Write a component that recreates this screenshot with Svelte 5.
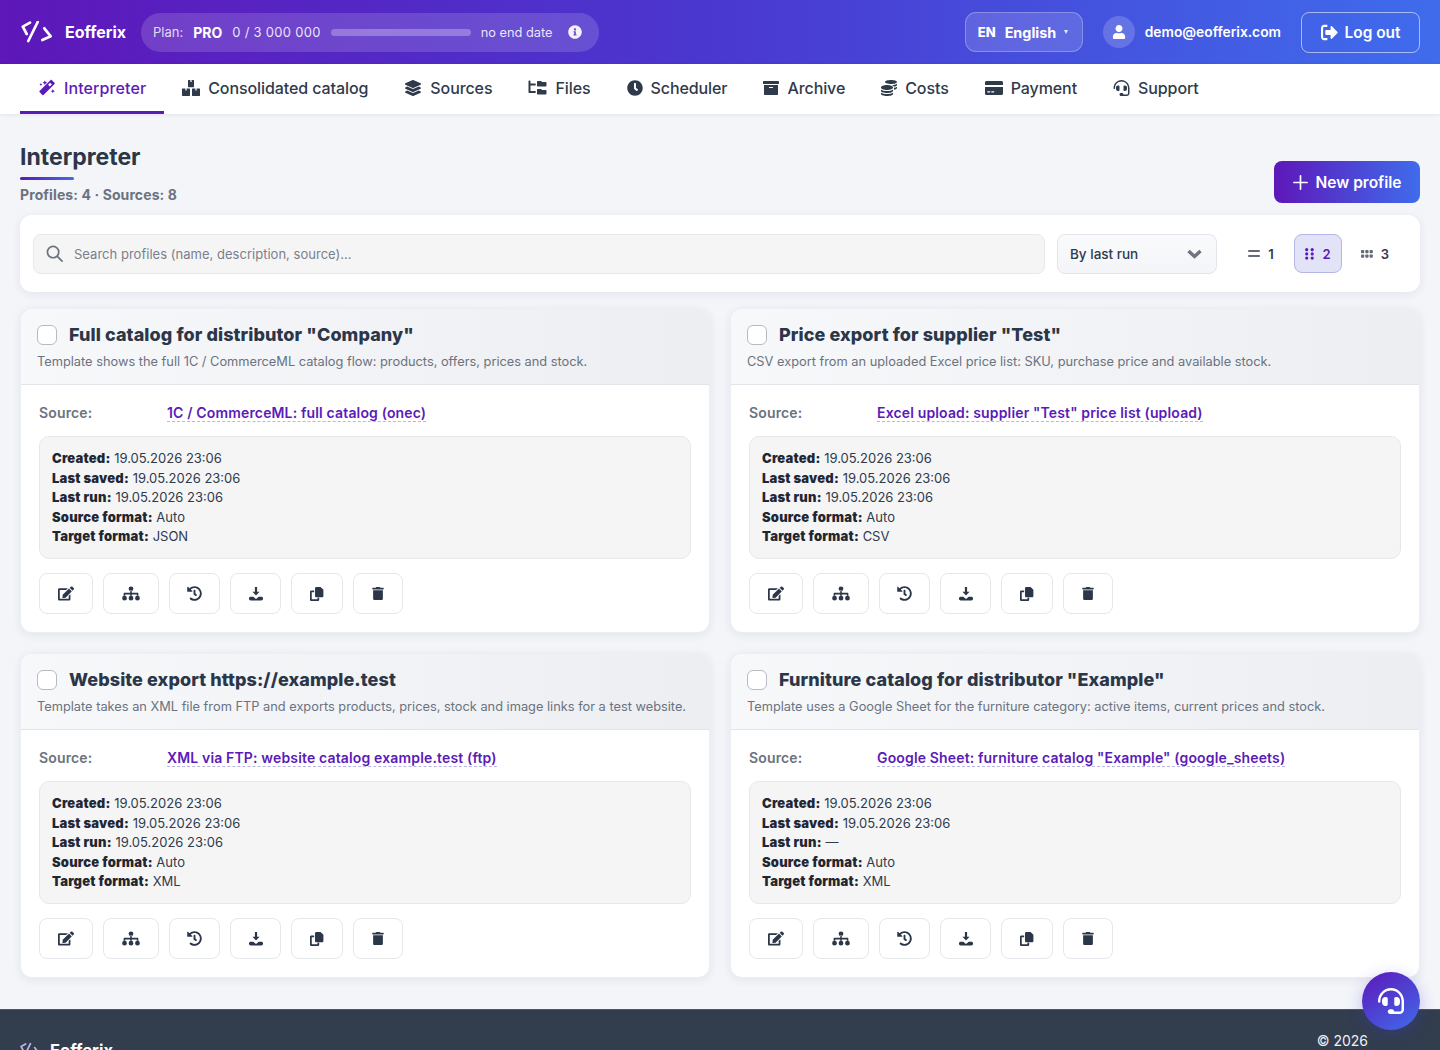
<script>
    const icons = {
        magic: ['0 0 512 512', 'M398 28l86 86c9 9 9 24 0 33L150 481c-9 9-24 9-33 0l-86-86c-9-9-9-24 0-33L365 28c9-9 24-9 33 0zM350 110l-62 62 52 52 62-62zM192 40l22 50 50 22-50 22-22 50-22-50-50-22 50-22zM72 120l14 32 32 14-32 14-14 32-14-32-32-14 32-14zM432 300l20 46 46 20-46 20-20 46-20-46-46-20 46-20z'],
        boxes: ['0 0 576 512', 'M192 16c0-9 7-16 16-16h160c9 0 16 7 16 16v200c0 9-7 16-16 16H208c-9 0-16-7-16-16zM268 0v60h40V0zM16 272h224c9 0 16 7 16 16v208c0 9-7 16-16 16H16c-9 0-16-7-16-16V288c0-9 7-16 16-16zM108 272v60h40v-60zM336 272h224c9 0 16 7 16 16v208c0 9-7 16-16 16H336c-9 0-16-7-16-16V288c0-9 7-16 16-16zM428 272v60h40v-60z'],
        layers: ['0 0 512 512', 'M12.41 148.02l232.94 105.67c6.8 3.09 14.49 3.09 21.29 0l232.94-105.67c16.55-7.51 16.55-32.52 0-40.03L266.65 2.31a25.607 25.607 0 0 0-21.29 0L12.41 107.98c-16.55 7.51-16.55 32.53 0 40.04zm487.18 88.28l-58.09-26.33-161.64 73.27c-7.56 3.43-15.59 5.17-23.86 5.17s-16.29-1.74-23.86-5.17L70.51 209.97l-58.1 26.33c-16.55 7.5-16.55 32.5 0 40l232.94 105.59c6.8 3.08 14.49 3.08 21.29 0L499.59 276.3c16.55-7.5 16.55-32.5 0-40zm0 127.8l-57.87-26.23-161.86 73.37c-7.56 3.43-15.59 5.17-23.86 5.17s-16.29-1.74-23.86-5.17L70.29 337.87 12.41 364.1c-16.55 7.5-16.55 32.5 0 40l232.94 105.59c6.8 3.08 14.49 3.08 21.29 0L499.59 404.1c16.55-7.5 16.55-32.5 0-40z'],
        files: ['0 0 576 512', 'M0 48C0 30 14 16 32 16s32 14 32 32v64h152c9 0 16 7 16 16v32c0 9-7 16-16 16H64v176h152c9 0 16 7 16 16v32c0 9-7 16-16 16H32c-18 0-32-14-32-32zM304 32h96l32 32h112c18 0 32 14 32 32v80c0 18-14 32-32 32H304c-18 0-32-14-32-32V64c0-18 14-32 32-32zM304 288h96l32 32h112c18 0 32 14 32 32v80c0 18-14 32-32 32H304c-18 0-32-14-32-32V320c0-18 14-32 32-32z'],
        clock: ['0 0 512 512', 'M256,8C119,8,8,119,8,256S119,504,256,504,504,393,504,256,393,8,256,8Zm92.49,313h0l-20,25a16,16,0,0,1-22.49,2.5h0l-67-49.72a40,40,0,0,1-15-31.23V112a16,16,0,0,1,16-16h32a16,16,0,0,1,16,16V256l58,42.5A16,16,0,0,1,348.49,321Z'],
        archive: ['0 0 512 512', 'M32 448c0 17.7 14.3 32 32 32h384c17.7 0 32-14.3 32-32V160H32v288zm160-212c0-6.6 5.4-12 12-12h104c6.6 0 12 5.4 12 12v8c0 6.6-5.4 12-12 12H204c-6.6 0-12-5.4-12-12v-8zM480 32H32C14.3 32 0 46.3 0 64v48c0 8.8 7.2 16 16 16h480c8.8 0 16-7.2 16-16V64c0-17.7-14.3-32-32-32z'],
        coins: ['0 0 512 512', 'M0 405.3V448c0 35.3 86 64 192 64s192-28.7 192-64v-42.7C342.7 434.4 267.2 448 192 448S41.3 434.4 0 405.3zM320 128c106 0 192-28.7 192-64S426 0 320 0 128 28.7 128 64s86 64 192 64zM0 300.4V352c0 35.3 86 64 192 64s192-28.7 192-64v-51.6c-41.3 34-116.9 51.6-192 51.6S41.3 334.4 0 300.4zm416 11c57.3-11.1 96-31.7 96-55.4v-42.7c-23.2 16.4-57.3 27.6-96 34.5v63.6zM192 160C86 160 0 195.8 0 240s86 80 192 80 192-35.8 192-80-86-80-192-80zm219.3 56.3c60-10.8 100.7-32 100.7-56.3v-42.7c-35.5 25.1-96.5 38.6-160.7 41.8 29.5 14.3 51.2 33.5 60 57.2z'],
        card: ['0 0 576 512', 'M0 432c0 26.5 21.5 48 48 48h480c26.5 0 48-21.5 48-48V224H0v208zm72-64c0-6.6 5.4-12 12-12h72c6.6 0 12 5.4 12 12v16c0 6.6-5.4 12-12 12H84c-6.6 0-12-5.4-12-12zm128 0c0-6.6 5.4-12 12-12h72c6.6 0 12 5.4 12 12v16c0 6.6-5.4 12-12 12h-72c-6.6 0-12-5.4-12-12zM576 80v80H0V80c0-26.5 21.5-48 48-48h480c26.5 0 48 21.5 48 48z'],
        headset: ['0 0 512 512', 'M192 208c0-17.67-14.33-32-32-32h-16c-35.35 0-64 28.65-64 64v48c0 35.35 28.65 64 64 64h16c17.67 0 32-14.33 32-32V208zm176 144c35.35 0 64-28.65 64-64v-48c0-35.35-28.65-64-64-64h-16c-17.67 0-32 14.33-32 32v112c0 17.67 14.33 32 32 32h16zM256 0C113.18 0 4.58 118.83 0 256v16c0 8.84 7.16 16 16 16h16c8.84 0 16-7.16 16-16v-16c0-114.69 93.31-208 208-208s208 93.31 208 208h-.12c.08 2.43.12 165.72.12 165.72 0 23.35-18.93 42.28-42.28 42.28H320c0-26.51-21.49-48-48-48h-32c-26.51 0-48 21.49-48 48s21.49 48 48 48h181.72c49.86 0 90.28-40.42 90.28-90.28V256C507.42 118.83 398.82 0 256 0z'],
        info: ['0 0 512 512', 'M256 8C119.043 8 8 119.083 8 256c0 136.997 111.043 248 248 248s248-111.003 248-248C504 119.083 392.957 8 256 8zm0 110c23.196 0 42 18.804 42 42s-18.804 42-42 42-42-18.804-42-42 18.804-42 42-42zm56 254c0 6.627-5.373 12-12 12h-88c-6.627 0-12-5.373-12-12v-24c0-6.627 5.373-12 12-12h12v-64h-12c-6.627 0-12-5.373-12-12v-24c0-6.627 5.373-12 12-12h64c6.627 0 12 5.373 12 12v100h12c6.627 0 12 5.373 12 12v24z'],
        user: ['0 0 448 512', 'M224 256c70.7 0 128-57.3 128-128S294.7 0 224 0 96 57.3 96 128s57.3 128 128 128zm89.6 32h-16.7c-22.2 10.2-46.9 16-72.9 16s-50.6-5.8-72.9-16h-16.7C60.2 288 0 348.2 0 422.4V464c0 26.5 21.5 48 48 48h352c26.5 0 48-21.5 48-48v-41.6c0-74.2-60.2-134.4-134.4-134.4z'],
        logout: ['0 0 512 512', 'M497 273L329 441c-15 15-41 4.5-41-17v-96H152c-13.3 0-24-10.7-24-24v-96c0-13.3 10.7-24 24-24h136V88c0-21.4 25.9-32 41-17l168 168c9.3 9.4 9.3 24.6 0 34zM192 436v40c0 6.6-5.4 12-12 12H96c-53 0-96-43-96-96V120c0-53 43-96 96-96h84c6.6 0 12 5.4 12 12v40c0 6.6-5.4 12-12 12H96c-17.7 0-32 14.3-32 32v272c0 17.7 14.3 32 32 32h84c6.6 0 12 5.4 12 12z'],
        edit: ['0 0 576 512', 'M402.6 83.2l90.2 90.2c3.8 3.8 3.8 10 0 13.8L274.4 405.6l-92.8 10.3c-12.4 1.4-22.9-9.1-21.5-21.5l10.3-92.8L388.8 83.2c3.8-3.8 10-3.8 13.8 0zm162-22.9l-48.8-48.8c-15.2-15.2-39.9-15.2-55.2 0l-35.4 35.4c-3.8 3.8-3.8 10 0 13.8l90.2 90.2c3.8 3.8 10 3.8 13.8 0l35.4-35.4c15.2-15.3 15.2-40 0-55.2zM384 346.2V448H64V128h229.8c3.2 0 6.2-1.3 8.5-3.5l40-40c7.6-7.6 2.2-20.5-8.5-20.5H48C21.5 64 0 85.5 0 112v352c0 26.5 21.5 48 48 48h352c26.5 0 48-21.5 48-48V306.2c0-10.7-12.9-16-20.5-8.5l-40 40c-2.2 2.3-3.5 5.3-3.5 8.5z'],
        sitemap: ['0 0 640 512', 'M235 90a85 85 0 1 0 170 0a85 85 0 1 0-170 0zM5 422a85 85 0 1 0 170 0a85 85 0 1 0-170 0zM235 422a85 85 0 1 0 170 0a85 85 0 1 0-170 0zM465 422a85 85 0 1 0 170 0a85 85 0 1 0-170 0zM292 150h56v82h212c12 0 22 10 22 22v90h-56v-56H348v56h-56v-56H114v56H58v-90c0-12 10-22 22-22h212z'],
        history: ['0 0 512 512', 'M504 255.531c.253 136.64-111.18 248.372-247.82 248.468-59.015.042-113.223-20.53-155.822-54.911-11.077-8.94-11.905-25.541-1.839-35.607l11.267-11.267c8.609-8.609 22.353-9.551 31.891-1.984C173.062 425.135 212.781 440 256 440c101.705 0 184-82.311 184-184 0-101.705-82.311-184-184-184-48.814 0-93.149 18.969-126.068 49.932l50.754 50.754c10.08 10.08 2.941 27.314-11.313 27.314H24c-8.837 0-16-7.163-16-16V38.627c0-14.254 17.234-21.393 27.314-11.314l49.372 49.372C129.209 34.136 189.552 8 256 8c136.81 0 247.747 110.78 248 247.531zm-180.912 78.784l9.823-12.63c8.138-10.463 6.253-25.542-4.21-33.679L288 256.349V152c0-13.255-10.745-24-24-24h-16c-13.255 0-24 10.745-24 24v135.651l65.409 50.874c10.463 8.137 25.541 6.253 33.679-4.21z'],
        download: ['0 0 512 512', 'M216 0h80v170h90L256 310 126 170h90zM0 410c0-30 30-50 60-50h100l70 60c15 13 37 13 52 0l70-60h100c30 0 60 20 60 50v30c0 30-30 50-60 50H60c-30 0-60-20-60-50z'],
        copy: ['0 0 512 512', 'M232 0h140c9 0 18 4 24 10l84 84c6 6 10 15 10 24v210c0 27-21 48-48 48H232c-27 0-48-21-48-48V48c0-27 21-48 48-48zM48 128h104v64H64v256h208v-56h64v72c0 27-21 48-48 48H48c-27 0-48-21-48-48V176c0-27 21-48 48-48z'],
        trash: ['0 0 448 512', 'M32 128h384v336a48 48 0 0 1-48 48H80a48 48 0 0 1-48-48zM432 32H312l-9.4-18.7A24 24 0 0 0 281.1 0H166.8a23.72 23.72 0 0 0-21.4 13.3L136 32H16A16 16 0 0 0 0 48v32a16 16 0 0 0 16 16h416a16 16 0 0 0 16-16V48a16 16 0 0 0-16-16z']
    };

    const navItems = [
        { label: 'Interpreter', icon: 'magic', w: 18, h: 17, active: true },
        { label: 'Consolidated catalog', icon: 'boxes', w: 18, h: 16 },
        { label: 'Sources', icon: 'layers', w: 18, h: 16 },
        { label: 'Files', icon: 'files', w: 19, h: 16 },
        { label: 'Scheduler', icon: 'clock', w: 16, h: 16 },
        { label: 'Archive', icon: 'archive', w: 16, h: 16 },
        { label: 'Costs', icon: 'coins', w: 16, h: 16 },
        { label: 'Payment', icon: 'card', w: 18, h: 16 },
        { label: 'Support', icon: 'headset', w: 17, h: 16 }
    ];

    const stamp = '19.05.2026 23:06';
    const profiles = [
        {
            title: 'Full catalog for distributor "Company"',
            desc: 'Template shows the full 1C / CommerceML catalog flow: products, offers, prices and stock.',
            source: '1C / CommerceML: full catalog (onec)',
            lastRun: stamp,
            target: 'JSON'
        },
        {
            title: 'Price export for supplier "Test"',
            desc: 'CSV export from an uploaded Excel price list: SKU, purchase price and available stock.',
            source: 'Excel upload: supplier "Test" price list (upload)',
            lastRun: stamp,
            target: 'CSV'
        },
        {
            title: 'Website export https://example.test',
            desc: 'Template takes an XML file from FTP and exports products, prices, stock and image links for a test website.',
            source: 'XML via FTP: website catalog example.test (ftp)',
            lastRun: stamp,
            target: 'XML'
        },
        {
            title: 'Furniture catalog for distributor "Example"',
            desc: 'Template uses a Google Sheet for the furniture category: active items, current prices and stock.',
            source: 'Google Sheet: furniture catalog "Example" (google_sheets)',
            lastRun: '—',
            target: 'XML'
        }
    ];

    const actions = [
        { icon: 'edit', title: 'Edit', width: 54, w: 16, h: 15 },
        { icon: 'sitemap', title: 'Structure', width: 56, w: 18, h: 15 },
        { icon: 'history', title: 'History', width: 51.4, w: 15, h: 15 },
        { icon: 'download', title: 'Download', width: 51, w: 14, h: 14 },
        { icon: 'copy', title: 'Copy', width: 51.4, w: 14, h: 14 },
        { icon: 'trash', title: 'Delete', width: 50, w: 12, h: 13 }
    ];

    let search = $state('');
    let columns = $state(2);
</script>

{#snippet icon(name, w, h = w)}
    <svg class="ico" width={w} height={h} viewBox={icons[name][0]} fill="currentColor">
        <path d={icons[name][1]}/>
    </svg>
{/snippet}

{#snippet logo(w)}
    <svg width={w} height={w * 0.6875} viewBox="-1 0 32 22" fill="none" stroke="currentColor" stroke-width="2.7" stroke-linecap="round" stroke-linejoin="round">
        <path d="M8 1.6 0.8 5.6 4.7 13"/>
        <path d="M15.7 1 6.3 20"/>
        <path d="M22.3 7.3 28.7 15.3 20.3 19"/>
    </svg>
{/snippet}

<div class="page">
    <header class="topbar">
        <div class="brand">
            {@render logo(32)}
            <span class="brand-name">Eofferix</span>
        </div>

        <div class="plan">
            <span class="plan-label">Plan:</span>
            <strong class="plan-name">PRO</strong>
            <span class="plan-usage">0 / 3 000 000</span>
            <span class="plan-bar"></span>
            <span class="plan-end">no end date</span>
            <span class="plan-info">{@render icon('info', 14)}</span>
        </div>

        <div class="topbar-right">
            <button class="lang">
                <span class="lang-code">EN</span>
                <span class="lang-name">English</span>
                <span class="lang-caret"></span>
            </button>
            <div class="account">
                <span class="avatar">{@render icon('user', 14)}</span>
                <span class="email">demo@eofferix.com</span>
            </div>
            <button class="logout">
                {@render icon('logout', 17)}
                Log out
            </button>
        </div>
    </header>

    <nav class="tabs">
        {#each navItems as item}
            <a class="tab" class:active={item.active} href="#top">
                {@render icon(item.icon, item.w, item.h)}
                {item.label}
            </a>
        {/each}
    </nav>

    <main class="content">
        <div class="page-head">
            <div>
                <h1>Interpreter</h1>
                <div class="title-rule"></div>
                <p class="counts">Profiles: 4 · Sources: 8</p>
            </div>
            <button class="new-profile">
                <svg width="15" height="15" viewBox="0 0 16 16" stroke="currentColor" stroke-width="1.8" stroke-linecap="round">
                    <path d="M8 1v14M1 8h14"/>
                </svg>
                New profile
            </button>
        </div>

        <section class="filters">
            <label class="search">
                <svg width="17" height="17" viewBox="0 0 18 18" fill="none" stroke="currentColor" stroke-width="1.8" stroke-linecap="round">
                    <circle cx="7.5" cy="7.5" r="6"/>
                    <path d="m12 12 5 5"/>
                </svg>
                <input bind:value={search} placeholder="Search profiles (name, description, source)..." />
            </label>

            <button class="sort">
                By last run
                <svg width="15" height="10" viewBox="0 0 15 10" fill="none" stroke="currentColor" stroke-width="3.4">
                    <path d="m1.5 2 6 5.5 6-5.5"/>
                </svg>
            </button>

            <div class="columns">
                <button class="col" class:on={columns === 1} onclick={() => (columns = 1)}>
                    <svg width="12" height="8" viewBox="0 0 12 8" fill="currentColor" class="col-ico"><rect width="12" height="2" rx="1"/><rect y="5" width="12" height="2" rx="1"/></svg>
                    1
                </button>
                <button class="col" class:on={columns === 2} onclick={() => (columns = 2)}>
                    <svg width="9" height="12" viewBox="0 0 9 12" fill="currentColor" class="col-ico">
                        {#each [0, 1, 2] as row}
                            <circle cx="1.7" cy={1.7 + row * 4.2} r="1.6"/>
                            <circle cx="7.2" cy={1.7 + row * 4.2} r="1.6"/>
                        {/each}
                    </svg>
                    2
                </button>
                <button class="col" class:on={columns === 3} onclick={() => (columns = 3)}>
                    <svg width="12" height="8" viewBox="0 0 12 8" fill="currentColor" class="col-ico">
                        {#each [0, 1] as row}
                            {#each [0, 1, 2] as c}
                                <rect x={c * 4.3} y={row * 4.5} width="3.2" height="3.2" rx="0.8"/>
                            {/each}
                        {/each}
                    </svg>
                    3
                </button>
            </div>
        </section>

        <section class="grid">
            {#each profiles as p}
                <article class="card">
                    <div class="card-head">
                        <div class="card-title">
                            <input type="checkbox" />
                            <h2>{p.title}</h2>
                        </div>
                        <p>{p.desc}</p>
                    </div>
                    <div class="card-body">
                        <div class="source">
                            <span class="source-label">Source:</span>
                            <a href="#top">{p.source}</a>
                        </div>
                        <div class="meta">
                            <div><b>Created:</b> {stamp}</div>
                            <div><b>Last saved:</b> {stamp}</div>
                            <div><b>Last run:</b> {p.lastRun}</div>
                            <div><b>Source format:</b> Auto</div>
                            <div><b>Target format:</b> {p.target}</div>
                        </div>
                        <div class="actions">
                            {#each actions as a}
                                <button class="act" title={a.title} style="width: {a.width}px">
                                    {@render icon(a.icon, a.w, a.h)}
                                </button>
                            {/each}
                        </div>
                    </div>
                </article>
            {/each}
        </section>
    </main>

    <footer class="footer">
        <div class="footer-brand">
            <span class="footer-logo">{@render logo(20)}</span>
            <span>Eofferix</span>
        </div>
        <div class="copy">© 2026</div>
    </footer>

    <button class="fab" title="Support">{@render icon('headset', 26)}</button>
</div>

<style>
    :global(body) {
        margin: 0;
        background: #f3f5f9;
        font-family: Inter, "Liberation Sans", sans-serif;
        color: #2f3a4b;
    }

    .page {
        position: relative;
        height: 1050px;
        overflow: hidden;
    }

    button {
        font-family: inherit;
        cursor: pointer;
    }

    .ico {
        display: block;
        flex-shrink: 0;
    }

    /* ── Top bar ───────────────────────────────────── */
    .topbar {
        display: flex;
        align-items: center;
        height: 64px;
        padding: 0 20px;
        box-sizing: border-box;
        background: linear-gradient(90deg, #5e17b9 0%, #4a38d0 50%, #3f6cec 100%);
        color: #fff;
    }

    .brand {
        display: flex;
        align-items: center;
        gap: 12px;
        margin-left: 1px;
        width: 120px;
    }

    .brand-name {
        font-size: 16px;
        font-weight: 700;
    }

    .plan {
        display: flex;
        align-items: center;
        height: 39px;
        width: 458px;
        box-sizing: border-box;
        padding: 0 17px 0 12px;
        border-radius: 20px;
        background: rgba(255, 255, 255, 0.15);
        font-size: 13px;
        color: rgba(255, 255, 255, 0.88);
    }

    .plan-label {
        margin-right: 10px;
        color: rgba(255, 255, 255, 0.82);
    }

    .plan-name {
        margin-right: 10px;
        color: #fff;
        font-size: 14px;
    }

    .plan-usage {
        margin-right: 10px;
        letter-spacing: 0.28px;
    }

    .plan-bar {
        width: 140px;
        height: 7px;
        margin-right: 10px;
        border-radius: 4px;
        background: rgba(255, 255, 255, 0.28);
    }

    .plan-end {
        font-size: 12.8px;
    }

    .plan-info {
        margin-left: auto;
        color: rgba(255, 255, 255, 0.92);
    }

    .topbar-right {
        display: flex;
        align-items: center;
        margin-left: auto;
    }

    .lang {
        display: flex;
        align-items: center;
        width: 118px;
        height: 40px;
        padding: 0 12px;
        border: 1px solid rgba(255, 255, 255, 0.25);
        border-radius: 11px;
        background: rgba(255, 255, 255, 0.14);
        color: #fff;
    }

    .lang-code {
        font-size: 13px;
        font-weight: 800;
        margin-right: 9px;
    }

    .lang-name {
        font-size: 14.4px;
        font-weight: 700;
    }

    .lang-caret {
        margin-left: 8px;
        border-left: 2.5px solid transparent;
        border-right: 2.5px solid transparent;
        border-top: 4px solid rgba(255, 255, 255, 0.85);
    }

    .account {
        display: flex;
        align-items: center;
        gap: 10px;
        margin: 0 20px;
    }

    .avatar {
        display: flex;
        align-items: center;
        justify-content: center;
        width: 32px;
        height: 32px;
        border-radius: 50%;
        background: rgba(255, 255, 255, 0.18);
    }

    .email {
        font-size: 13.8px;
        font-weight: 600;
    }

    .logout {
        display: flex;
        align-items: center;
        justify-content: center;
        gap: 7px;
        width: 119px;
        height: 41px;
        border: 1.5px solid rgba(255, 255, 255, 0.55);
        border-radius: 8px;
        background: transparent;
        color: #fff;
        font-size: 15.4px;
        font-weight: 600;
    }

    /* ── Tabs ──────────────────────────────────────── */
    .tabs {
        display: flex;
        height: 50px;
        padding: 0 20px;
        background: #fff;
        box-shadow: 0 1px 4px rgba(30, 40, 70, 0.08);
    }

    .tab {
        display: flex;
        align-items: center;
        gap: 8px;
        padding: 0 18px;
        border-bottom: 3px solid transparent;
        color: #2f3a4b;
        font-size: 16px;
        font-weight: 500;
        letter-spacing: -0.09px;
        text-decoration: none;
    }

    .tab.active {
        color: #5b1bb8;
        border-bottom-color: #5b1bb8;
        letter-spacing: 0.1px;
    }

    /* ── Page content ──────────────────────────────── */
    .content {
        padding: 29px 20px 31px;
    }

    .page-head {
        display: flex;
        justify-content: space-between;
        align-items: flex-end;
        margin-bottom: 12px;
    }

    h1 {
        margin: 0;
        font-size: 23px;
        line-height: 29px;
        font-weight: 700;
        color: #2b3648;
    }

    .title-rule {
        width: 54px;
        height: 3px;
        margin-top: 5px;
        border-radius: 2px;
        background: linear-gradient(90deg, #5e17b9, #3f6cec);
    }

    .counts {
        margin: 6px 0 0;
        font-size: 14px;
        line-height: 17px;
        font-weight: 700;
        letter-spacing: 0.1px;
        color: #6b7280;
    }

    .new-profile {
        display: flex;
        align-items: center;
        justify-content: center;
        gap: 8px;
        width: 146px;
        height: 42px;
        border: 0;
        border-radius: 8px;
        background: linear-gradient(90deg, #5e17b9, #3f6cec);
        color: #fff;
        font-size: 15.5px;
        font-weight: 600;
    }

    .filters {
        display: flex;
        align-items: center;
        gap: 12px;
        height: 77px;
        box-sizing: border-box;
        padding: 0 13px;
        border-radius: 12px;
        background: #fff;
        box-shadow: 0 2px 10px rgba(30, 40, 70, 0.08);
    }

    .search {
        flex: 1;
        display: flex;
        align-items: center;
        gap: 11px;
        height: 40px;
        box-sizing: border-box;
        padding: 0 12px;
        border: 1px solid #e8e8ea;
        border-radius: 8px;
        background: #f5f5f6;
        color: #6b7280;
    }

    .search input {
        flex: 1;
        border: 0;
        outline: 0;
        padding: 0;
        background: transparent;
        font-family: inherit;
        font-size: 13px;
        letter-spacing: 0.02px;
        color: #2f3a4b;
    }

    .search input::placeholder {
        color: #7a808a;
    }

    .sort {
        display: flex;
        align-items: center;
        justify-content: space-between;
        width: 160px;
        height: 40px;
        box-sizing: border-box;
        padding: 0 14px 0 12px;
        border: 1px solid #e3e5ea;
        border-radius: 8px;
        background: linear-gradient(180deg, #f9fafc, #f4f5f8);
        color: #2f3a4b;
        font-size: 13.5px;
        font-weight: 500;
    }

    .sort svg {
        color: #6f7480;
    }

    .columns {
        display: flex;
        align-items: center;
        gap: 9px;
        margin-left: 8px;
        margin-right: 8px;
    }

    .col {
        display: flex;
        align-items: center;
        justify-content: center;
        gap: 8px;
        width: 48px;
        height: 39px;
        padding: 0;
        border: 1px solid transparent;
        border-radius: 8px;
        background: transparent;
        color: #2f3a4b;
        font-size: 13px;
        font-weight: 600;
    }

    .col.on {
        background: #e3e3f7;
        border-color: #b3b6e6;
        color: #5b1bb8;
    }

    .col-ico {
        opacity: 0.75;
    }

    .col.on .col-ico {
        opacity: 1;
    }

    /* ── Profile cards ─────────────────────────────── */
    .grid {
        display: grid;
        grid-template-columns: 1fr 1fr;
        gap: 20px;
        margin-top: 16px;
    }

    .card {
        overflow: hidden;
        border: 1px solid #eceef2;
        border-radius: 12px;
        background: #fff;
        box-shadow: 0 2px 10px rgba(30, 40, 70, 0.08);
    }

    .card-head {
        height: 76px;
        box-sizing: border-box;
        padding: 15px 16px 0;
        border-bottom: 1px solid #e2e4e9;
        background: linear-gradient(90deg, #f7f8fa, #eceef2);
    }

    .card-title {
        display: flex;
        align-items: center;
        gap: 12px;
    }

    .card-title input {
        appearance: none;
        width: 20px;
        height: 20px;
        margin: 0;
        border: 1px solid #b6bac2;
        border-radius: 6px;
        background: #fff;
    }

    h2 {
        margin: 0;
        font-size: 18px;
        line-height: 22px;
        font-weight: 800;
        letter-spacing: 0.09px;
        color: #2b3648;
    }

    .card-head p {
        margin: 8px 0 0;
        font-size: 12.8px;
        line-height: 16px;
        color: #6b7280;
        white-space: nowrap;
    }

    .card-body {
        padding: 19px 18px 18px;
    }

    .source {
        display: flex;
        font-size: 14px;
        line-height: 17px;
        font-weight: 600;
        letter-spacing: 0.15px;
    }

    .source-label {
        width: 128px;
        color: #6b7280;
    }

    .source a {
        color: #5b1bb8;
        text-decoration: none;
        border-bottom: 1px dashed #b9b4e6;
    }

    .meta {
        height: 123px;
        box-sizing: border-box;
        margin-top: 14px;
        padding: 12px 12px;
        border: 1px solid #e6e7ea;
        border-radius: 10px;
        background: #f5f5f6;
        font-size: 13px;
        line-height: 19.6px;
        color: #2f3a4b;
    }

    .meta b {
        font-weight: 900;
        letter-spacing: 0.2px;
        color: #1f2733;
    }

    .actions {
        display: flex;
        gap: 10px;
        margin-top: 14px;
    }

    .act {
        display: flex;
        align-items: center;
        justify-content: center;
        height: 41px;
        padding: 0;
        border: 1px solid #e5e7eb;
        border-radius: 8px;
        background: #fff;
        color: #2b3648;
    }

    /* ── Footer + floating help ────────────────────── */
    .footer {
        display: flex;
        justify-content: space-between;
        height: 120px;
        box-sizing: border-box;
        padding: 22px 72px 0 20px;
        border-top: 1px solid #4b5669;
        background: #323d4e;
        color: #eef0f4;
    }

    .footer-brand {
        display: flex;
        align-items: center;
        align-self: flex-start;
        gap: 10px;
        margin-top: 8px;
        font-size: 16.5px;
        font-weight: 700;
        color: #fff;
    }

    .footer-logo {
        display: flex;
        color: #b9b7ee;
    }

    .copy {
        font-size: 14px;
        line-height: 17px;
    }

    .fab {
        position: absolute;
        top: 972px;
        right: 20px;
        display: flex;
        align-items: center;
        justify-content: center;
        width: 58px;
        height: 58px;
        padding: 0;
        border: 0;
        border-radius: 50%;
        background: linear-gradient(145deg, #5e17b9, #3f6cec);
        color: #fff;
        box-shadow: 0 4px 16px rgba(60, 60, 200, 0.3);
    }
</style>
